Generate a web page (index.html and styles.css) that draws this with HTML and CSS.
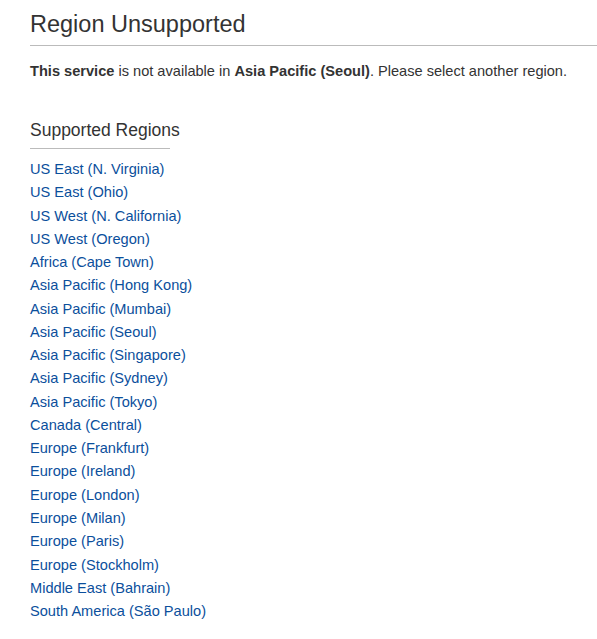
FILE: index.html
```html
<!DOCTYPE html>
<html>
<head>
<meta charset="utf-8">
<link rel="stylesheet" href="styles.css">
</head>
<body>
<div class="page">
  <h1 class="title">Region Unsupported</h1>
  <p class="message"><b>This service</b> is not available in <b>Asia Pacific (Seoul)</b>. Please select another region.</p>
  <h2 class="subtitle">Supported Regions</h2>
  <ul class="regions">
    <li><a href="#">US East (N. Virginia)</a></li>
    <li><a href="#">US East (Ohio)</a></li>
    <li><a href="#">US West (N. California)</a></li>
    <li><a href="#">US West (Oregon)</a></li>
    <li><a href="#">Africa (Cape Town)</a></li>
    <li><a href="#">Asia Pacific (Hong Kong)</a></li>
    <li><a href="#">Asia Pacific (Mumbai)</a></li>
    <li><a href="#">Asia Pacific (Seoul)</a></li>
    <li><a href="#">Asia Pacific (Singapore)</a></li>
    <li><a href="#">Asia Pacific (Sydney)</a></li>
    <li><a href="#">Asia Pacific (Tokyo)</a></li>
    <li><a href="#">Canada (Central)</a></li>
    <li><a href="#">Europe (Frankfurt)</a></li>
    <li><a href="#">Europe (Ireland)</a></li>
    <li><a href="#">Europe (London)</a></li>
    <li><a href="#">Europe (Milan)</a></li>
    <li><a href="#">Europe (Paris)</a></li>
    <li><a href="#">Europe (Stockholm)</a></li>
    <li><a href="#">Middle East (Bahrain)</a></li>
    <li><a href="#">South America (São Paulo)</a></li>
  </ul>
</div>
</body>
</html>
```
FILE: styles.css
```css
html, body {
  margin: 0;
  padding: 0;
  background: #fff;
}
body {
  font-family: "Liberation Sans", Arial, sans-serif;
  color: #333;
  font-size: 14.6px;
}
.page {
  padding: 9px 0 0 30px;
}
.title {
  margin: 0;
  font-size: 23.5px;
  font-weight: normal;
  line-height: 30px;
  padding-bottom: 6px;
  border-bottom: 1px solid #bbb;
  color: #333;
}
.message {
  margin: 15px 0 0;
  line-height: 20px;
}
.subtitle {
  display: inline-block;
  margin: 38px 0 0;
  font-size: 17.5px;
  font-weight: normal;
  line-height: 22px;
  padding-bottom: 7px;
  width: 140px;
  white-space: nowrap;
  border-bottom: 1px solid #bbb;
}
.regions {
  list-style: none;
  margin: 9px 0 0;
  padding: 0;
}
.regions li {
  line-height: 23.26px;
}
.regions a {
  color: #0b4f9c;
  text-decoration: none;
}
```
